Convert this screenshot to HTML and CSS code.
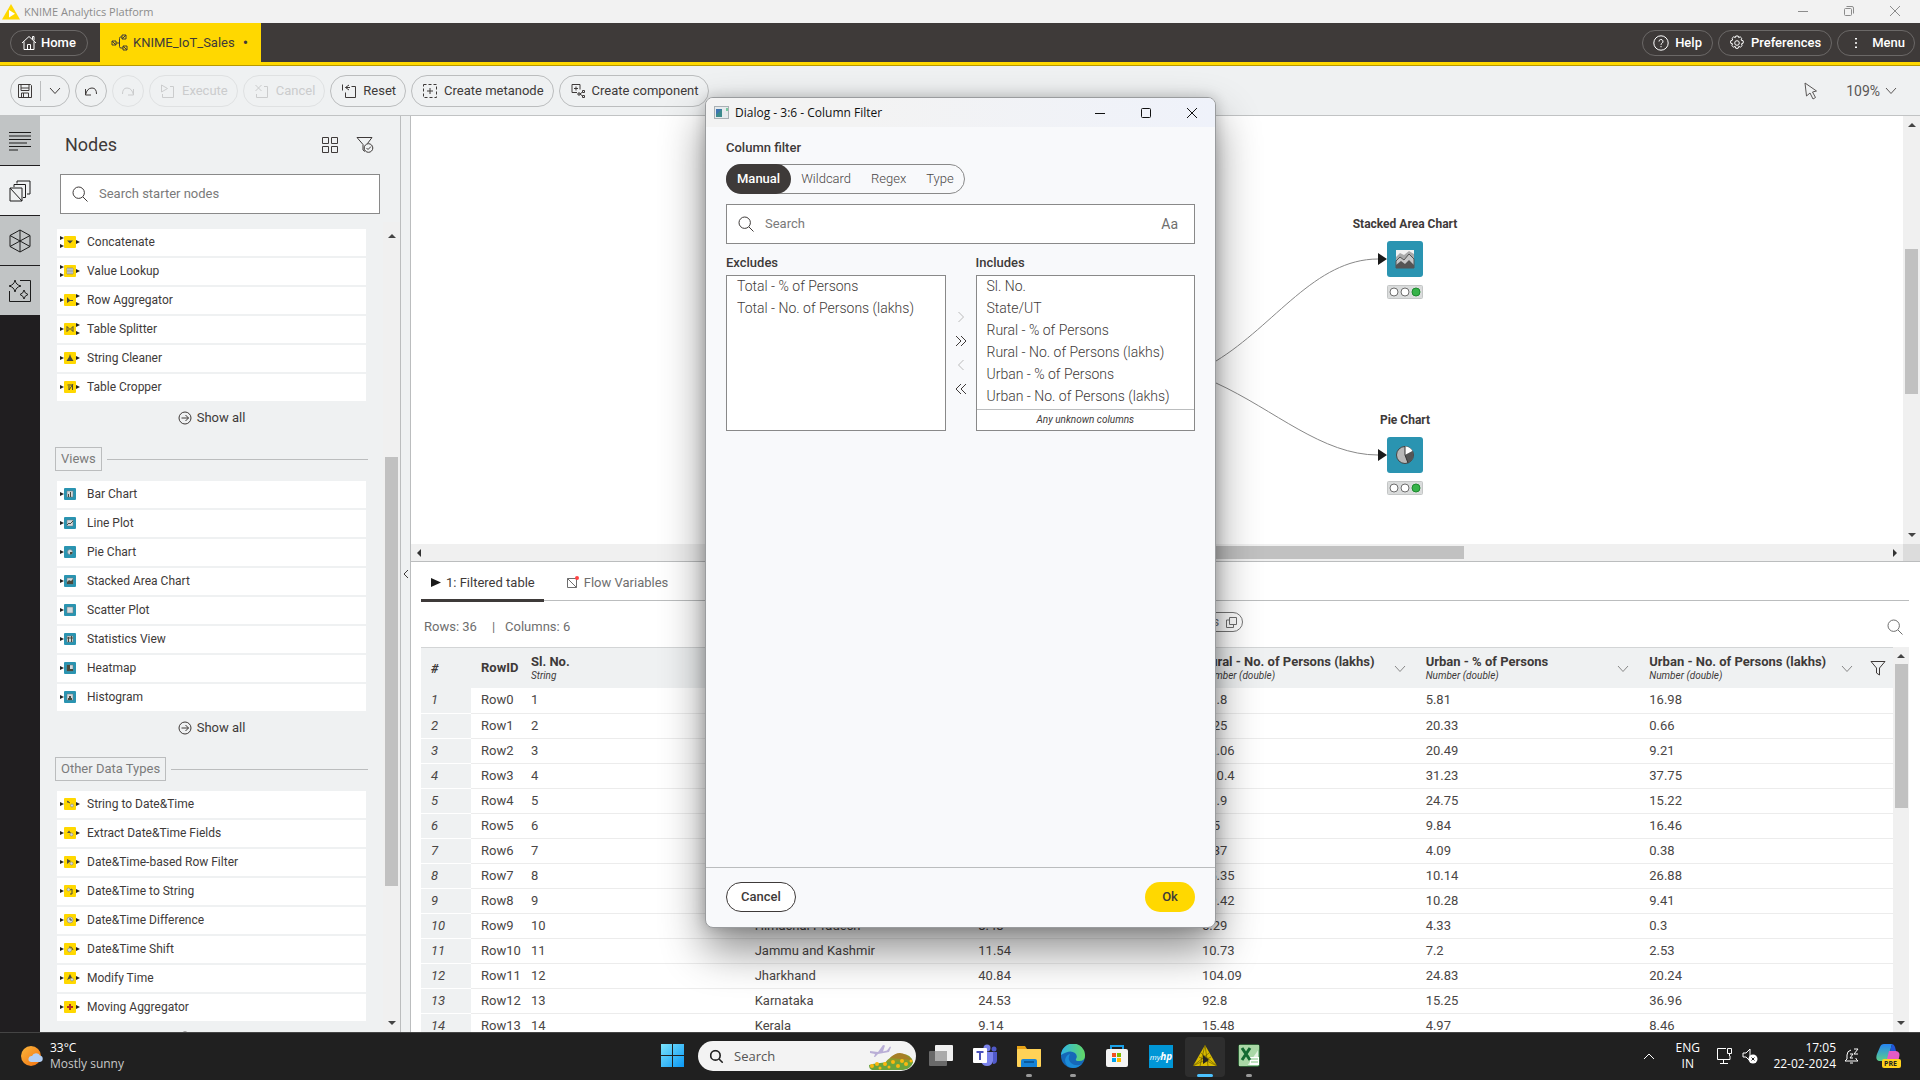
FILE: index.html
```html
<!DOCTYPE html>
<html lang="en">
<head>
<meta charset="utf-8">
<title>KNIME Analytics Platform</title>
<link rel="stylesheet" href="styles.css">
</head>
<body>
<svg class="defs" aria-hidden="true">
  <symbol id="search" viewBox="0 0 16 16"><circle cx="6.7" cy="6.7" r="5.7"/><path d="M11 11l4.500 4.500"/></symbol>
  <symbol id="chev" viewBox="0 0 12 8"><path d="M1 1l5 5.500 5-5.500"/></symbol>
  <symbol id="go" viewBox="0 0 14 14"><circle cx="7" cy="7" r="6"/><path d="M3.500 7h7M7.500 4l3 3-3 3"/></symbol>
  <symbol id="n11" viewBox="0 0 20 14"><path class="port" d="M0 5l4 2-4 2zM16 5l4 2-4 2z"/><rect class="yel" x="4" y="1" width="12" height="12" rx="1"/></symbol>
  <symbol id="n21" viewBox="0 0 20 14"><path class="port" d="M0 1l4 2-4 2zM0 9l4 2-4 2zM16 5l4 2-4 2z"/><rect class="yel" x="4" y="1" width="12" height="12" rx="1"/></symbol>
  <symbol id="n12" viewBox="0 0 20 14"><path class="port" d="M0 5l4 2-4 2zM16 1l4 2-4 2zM16 9l4 2-4 2z"/><rect class="yel" x="4" y="1" width="12" height="12" rx="1"/></symbol>
  <symbol id="n10" viewBox="0 0 20 14"><path class="port" d="M0 5l4 2-4 2z"/><rect class="blu" x="4" y="1" width="12" height="12" rx="1"/></symbol>
  <symbol id="lights" viewBox="0 0 36 14"><rect x=".5" y=".5" width="35" height="13" rx="1" fill="#dadcdc" stroke="#c4c6c6"/><g fill="#fff" stroke="#6e6e6e"><circle cx="7" cy="7" r="4"/><circle cx="18" cy="7" r="4"/></g><circle cx="29" cy="7" r="4" fill="#37b34a" stroke="#1d8a2f"/></symbol>
</svg>

<header class="titlebar">
  <svg width="18" height="16" viewBox="0 0 18 16"><path d="M9 0l9 15.500H0z" fill="#ffd800"/><path d="M7 6l6 3.700-6 3.700z" fill="#fff"/></svg>
  <span class="app-name">KNIME Analytics Platform</span>
  <div class="win-btns">
    <button aria-label="Minimize"><svg width="12" height="12"><path d="M1 6.500h10"/></svg></button>
    <button aria-label="Restore"><svg width="12" height="12"><rect x="1.500" y="3.500" width="7" height="7" rx="1"/><path d="M3.500 1.500h5.500a1.500 1.500 0 0 1 1.500 1.500v5.500"/></svg></button>
    <button aria-label="Close"><svg width="12" height="12"><path d="M1 1l10 10M11 1L1 11"/></svg></button>
  </div>
</header>

<nav class="appbar">
  <button class="dark-btn home"><svg width="16" height="16"><path d="M1 8l7-6.500L15 8M3 6.500v8h10v-8M6.500 14.500v-5h3v5M11.500 4.500v-3h1.500v4"/></svg>Home</button>
  <button class="tab-file"><svg width="18" height="18"><path d="M1 7h4v4H1zM1 7l4 4M11 1h4v4h-4zM11 5l4-4M12 12h4v4h-4zM12 12l4 4M5 9h3.500M11 3H9.500q-1 0-1 1.500v8q0 1.500 1.500 1.500h2"/></svg>KNIME_IoT_Sales<span class="dot">•</span></button>
  <div class="app-right">
    <button class="dark-btn help"><svg width="16" height="16"><circle cx="8" cy="8" r="7.200"/><path d="M6 6.500a2 2 0 1 1 3 1.700q-1 .6-1 1.600M8 11v1.200"/></svg>Help</button>
    <button class="dark-btn prefs"><svg width="16" height="16"><circle cx="8" cy="8" r="2.300"/><path d="M6.800 1h2.400l.5 1.600 1.500-.8 1.600 1.600-.8 1.600 2.200.8v2.400l-1.800.6.8 1.700-1.700 1.600-1.700-.7-.7 1.900H6.800l-.6-1.900-1.700.7-1.700-1.600.8-1.700-1.900-.6V5.800L3.700 5 3 3.400l1.700-1.600 1.600.8z"/></svg>Preferences</button>
    <button class="dark-btn menu"><svg width="16" height="16"><path d="M8 3v1.500M8 7.200v1.500M8 11.500V13"/></svg>Menu</button>
  </div>
</nav>

<div class="toolbar">
  <div class="pill save"><button aria-label="Save"><svg width="16" height="16"><path d="M1.500 1.500h12l1 1v12h-13zM4 1.500v6h8v-6M4.500 14.500V10h7v4.500M6.500 10v4.500M4 5h8"/></svg></button><button aria-label="Save options"><svg width="12" height="8"><use href="#chev"/></svg></button></div>
  <button class="pill round" aria-label="Undo"><svg width="14" height="14"><path d="M1.500 5v6h5.500M1.500 11Q3 4 8 4q4.500 0 4.500 6"/></svg></button>
  <button class="pill round" disabled aria-label="Redo"><svg width="14" height="14"><path d="M12.500 5v6H7M12.500 11Q11 4 6 4 1.500 4 1.500 10"/></svg></button>
  <button class="pill" disabled><svg width="16" height="16"><path d="M1.500 2l6 3.500-6 3.500zM10 3.500h3.500v11h-11V11"/></svg>Execute</button>
  <button class="pill" disabled><svg width="16" height="16"><path d="M1.500 2l6 6M7.500 2l-6 6M10 3.500h3.500v11h-11V11"/></svg>Cancel</button>
  <button class="pill"><svg width="16" height="16"><path d="M1.500 1.500v6M8 2L4.500 4.500 8 7M4.500 4.500H9M10.500 3.500h4v11h-10V9.500"/></svg>Reset</button>
  <button class="pill"><svg width="16" height="16"><rect x="1.500" y="1.500" width="13" height="13" stroke-dasharray="3 2"/><path d="M8 5v6M5 8h6"/></svg>Create metanode</button>
  <button class="pill"><svg width="16" height="16"><path d="M2 1.500h8v5M2 1.500v8h5M6 3.500v4M4 5.500h4M8 10h2v2H8zM12.500 7.500h2v2h-2zM12.500 12.500h2v2h-2zM10 11l2.500-2M10 11l2.500 2"/></svg>Create component</button>
  <div class="tool-right">
    <button class="plain" aria-label="Selection mode"><svg width="14" height="18"><path d="M1 1l1.500 13L6 11l3 6 2.500-1.500L8.500 10l4-1z"/></svg></button>
    <button class="plain zoom">109%<svg width="12" height="8"><use href="#chev"/></svg></button>
  </div>
</div>

<main class="main">
  <aside class="rail">
    <button aria-label="Description"><svg width="22" height="20"><path d="M0 1.500h22M0 5h22M0 8.500h22M0 12h18M0 15.500h22M0 19h9"/></svg></button>
    <button class="on" aria-label="Nodes"><svg width="22" height="22"><path d="M1 8h12v13H1zM1 8l12 13M5 7V4.500h11.500v13H14M8 3.500V1h13v13h-3"/></svg></button>
    <button aria-label="Components"><svg width="22" height="24"><path d="M11 1l10 5.500v11L11 23 1 17.500v-11zM11 1v22M1 6.500l20 11M21 6.500l-20 11"/></svg></button>
    <button aria-label="AI assistant"><svg width="24" height="24"><path d="M12 1.500h10.500v21H1.500V12M7 1q.8 5 6 6-5.200 1-6 6-.8-5-6-6 5.200-1 6-6zM16 11q.6 3.500 4 4.500-3.400 1-4 4.500-.6-3.500-4-4.500 3.400-1 4-4.500z"/></svg></button>
  </aside>

  <section class="repo">
    <div class="repo-head"><h2>Nodes</h2>
      <button class="plain" aria-label="Grid view"><svg width="18" height="18"><path d="M1.500 1.500h6v6h-6zM10.500 1.500h6v6h-6zM1.500 10.500h6v6h-6zM10.500 10.500h6v6h-6z"/></svg></button>
      <button class="plain" aria-label="Filter nodes"><svg width="18" height="18"><path d="M7 14V8.500L1 1.500h15l-4.500 6M7 14l2 1.500"/><circle cx="12.500" cy="12" r="4.300"/><path d="M10.500 12l1.500 1.500 3-3"/></svg></button>
    </div>
    <label class="field repo-search"><svg width="16" height="16"><use href="#search"/></svg><input type="text" placeholder="Search starter nodes" aria-label="Search starter nodes"></label>
    <div class="repo-body">
      <div class="repo-list">
        <ul>
          <li><svg class="nd"><use href="#n21"/><path class="g" d="M7 5.500h6l-3 3z"/></svg>Concatenate</li>
          <li><svg class="nd"><use href="#n21"/><path class="g w" d="M7 4h6v6H7zM7 7h6M9 4v6M11 4v6"/></svg>Value Lookup</li>
          <li><svg class="nd"><use href="#n12"/><path class="g" d="M7 4v6l3-2h3V7h-3z"/></svg>Row Aggregator</li>
          <li><svg class="nd"><use href="#n12"/><path class="g l" d="M7 4.500v5l2.500-2.500zM13 4.500v5L10.500 7z"/></svg>Table Splitter</li>
          <li><svg class="nd"><use href="#n11"/><path class="g" d="M10 3l1 3 2.500 4h-7L9 6z"/></svg>String Cleaner</li>
          <li><svg class="nd"><use href="#n11"/><path class="g l" d="M7.500 5h5v5M9 10l4-6M9 6v4"/></svg>Table Cropper</li>
        </ul>
        <a class="all" href="#data"><svg width="14" height="14"><use href="#go"/></svg>Show all</a>
        <h3><span>Views</span></h3>
        <ul>
          <li><svg class="nd"><use href="#n10"/><path class="g w" d="M7 4h6v6H7z"/><path class="g l" d="M8.500 7v3M10.500 5v5"/></svg>Bar Chart</li>
          <li><svg class="nd"><use href="#n10"/><path class="g w" d="M7 4h6v6H7z"/><path class="g l" d="M7 9l2-2 1 1 3-3"/></svg>Line Plot</li>
          <li><svg class="nd"><use href="#n10"/><circle class="g w" cx="10" cy="7" r="2.500"/><path class="g" d="M10 7h2.500a2.500 2.500 0 0 1-2.500 2.500z"/></svg>Pie Chart</li>
          <li><svg class="nd"><use href="#n10"/><path class="g w" d="M7 4h6v6H7z"/><path class="g" d="M7 8l2-2 2 1 2-2v5H7z"/></svg>Stacked Area Chart</li>
          <li><svg class="nd"><use href="#n10"/><path class="g w" d="M7 4h6v6H7z"/></svg>Scatter Plot</li>
          <li><svg class="nd"><use href="#n10"/><path class="g w" d="M7 4h6v6H7z"/><path class="g l" d="M8.500 5v5M11.500 4v6M7 6h6"/></svg>Statistics View</li>
          <li><svg class="nd"><use href="#n10"/><path class="g w" d="M7 4h6v6H7z"/><path class="g" d="M7 4h3v4h3v2H7z"/></svg>Heatmap</li>
          <li><svg class="nd"><use href="#n10"/><path class="g w" d="M7 4h6v6H7z"/><path class="g" d="M8 10V8h1V6h2v2h1v2z"/></svg>Histogram</li>
        </ul>
        <a class="all" href="#views"><svg width="14" height="14"><use href="#go"/></svg>Show all</a>
        <h3><span>Other Data Types</span></h3>
        <ul>
          <li><svg class="nd"><use href="#n11"/><path class="g l" d="M7 4l3 2M8 6V4"/><circle class="g w" cx="12" cy="8.500" r="1.500"/></svg>String to Date&amp;Time</li>
          <li><svg class="nd"><use href="#n11"/><path class="g" d="M7 7h4L9 4.500z"/><circle class="g w" cx="11.500" cy="8.500" r="1.500"/></svg>Extract Date&amp;Time Fields</li>
          <li><svg class="nd"><use href="#n11"/><path class="g" d="M7 4l4 2-4 3z"/><circle class="g w" cx="11.500" cy="8.500" r="1.500"/></svg>Date&amp;Time-based Row Filter</li>
          <li><svg class="nd"><use href="#n11"/><circle class="g w" cx="8.500" cy="5.500" r="1.500"/><path class="g l" d="M10 6l2-1v5h-2"/></svg>Date&amp;Time to String</li>
          <li><svg class="nd"><use href="#n11"/><circle class="g w" cx="10" cy="7" r="3"/><path class="g l" d="M10 5v2h2"/></svg>Date&amp;Time Difference</li>
          <li><svg class="nd"><use href="#n11"/><circle class="g w" cx="9.500" cy="8" r="2"/><path class="g l" d="M9 5q3-1 4 3"/></svg>Date&amp;Time Shift</li>
          <li><svg class="nd"><use href="#n11"/><path class="g" d="M7 9l3-6 2 4-3 1z"/><circle class="g w" cx="12" cy="8.500" r="1.500"/></svg>Modify Time</li>
          <li><svg class="nd"><use href="#n11"/><path class="plus" d="M10 4v6M7 7h6"/></svg>Moving Aggregator</li>
        </ul>
        <a class="all" href="#other"><svg width="14" height="14"><use href="#go"/></svg>Show all</a>
      </div>
      <div class="vbar repo-bar"><i class="up"></i><b></b><i class="down"></i></div>
    </div>
  </section>
  <button class="collapser" aria-label="Collapse panel"><svg width="6" height="10"><path d="M5 1L1 5l4 4"/></svg></button>

  <section class="work">
    <div class="canvas-row">
      <div class="canvas">
        <svg class="wires"><path d="M805 245C864 209 904 143 967 143M805 267C864 294 911 339 967 339"/><path class="tip" d="M967 137l9 6-9 6zM967 333l9 6-9 6z"/></svg>
        <div class="node area"><strong>Stacked Area Chart</strong>
          <svg width="36" height="36" viewBox="0 0 36 36"><rect width="36" height="36" rx="3" fill="#2a94b1"/><path d="M9 9h18v18H9z" fill="#f2f2f2"/><path d="M9 16l4-4 4 2 5-4 5 3v14H9z" fill="#aaa"/><path d="M9 20l4-4 4 3 5-6 5 5v9H9z" fill="#c8c8c8" stroke="#555"/><path d="M9 24l5-4 4 3 4-4 5 5v3H9z" fill="#555"/></svg>
          <svg width="36" height="14"><use href="#lights"/></svg></div>
        <div class="node pie"><strong>Pie Chart</strong>
          <svg width="36" height="36" viewBox="0 0 36 36"><rect width="36" height="36" rx="3" fill="#2a94b1"/><circle cx="18" cy="18" r="8.500" fill="#b8b8b8" stroke="#444"/><path d="M18 18V9.500a8.500 8.500 0 0 1 7.500 4.500z" fill="#fff"/><path d="M18 18l7.500-4a8.500 8.500 0 0 1-4.500 12z" fill="#555"/><path d="M18 9.500V18l3 8" fill="none" stroke="#333"/></svg>
          <svg width="36" height="14"><use href="#lights"/></svg></div>
      </div>
      <div class="vbar canvas-v"><i class="up"></i><b></b><i class="down"></i></div>
    </div>
    <div class="hbar"><i class="left"></i><b></b><i class="right"></i><span class="corner"></span></div>

    <div class="output">
      <div class="tabs">
        <button class="tab on"><svg width="10" height="10"><path d="M0 0l10 4.500L0 9z" fill="#1a1a1a"/></svg>1: Filtered table</button>
        <button class="tab"><svg width="13" height="13"><path d="M1.500 2.500h9v9h-9zM1.500 2.500l9 9"/><circle cx="11" cy="2" r="2" fill="#f44"/></svg>Flow Variables</button>
      </div>
      <div class="info">
        <span>Rows: 36</span><span class="bar">|</span><span>Columns: 6</span>
        <button class="stats">Statistics<svg width="13" height="13"><path d="M4.500 1.500h7v7h-7zM4.500 4h-3v7.500h7v-3"/></svg></button>
        <button class="plain find" aria-label="Search table"><svg width="16" height="16"><use href="#search"/></svg></button>
      </div>
      <div class="table-row">
        <div class="table-clip">
        <table>
          <colgroup><col class="c-i"><col class="c-r"><col><col><col><col><col><col><col class="c-f"></colgroup>
          <thead><tr><th><em class="hash">#</em></th><th>RowID</th>
            <th>Sl. No.<em>String</em></th><th></th><th></th>
            <th>Rural - No. of Persons (lakhs)<em>Number (double)</em><svg class="hc" width="12" height="8"><use href="#chev"/></svg></th>
            <th>Urban - % of Persons<em>Number (double)</em><svg class="hc" width="12" height="8"><use href="#chev"/></svg></th>
            <th>Urban - No. of Persons (lakhs)<em>Number (double)</em><svg class="hc" width="12" height="8"><use href="#chev"/></svg></th>
            <th class="fcell"><button class="plain" aria-label="Filter"><svg width="16" height="16"><path d="M1 1.500h14l-5.500 6.500v7l-3-2V8z"/></svg></button></th></tr></thead>
          <tbody>
            <tr><td>1</td><td>Row0</td><td>1</td><td></td><td></td><td>31.8</td><td>5.81</td><td>16.98</td><td></td></tr>
            <tr><td>2</td><td>Row1</td><td>2</td><td></td><td></td><td>1.25</td><td>20.33</td><td>0.66</td><td></td></tr>
            <tr><td>3</td><td>Row2</td><td>3</td><td></td><td></td><td>92.06</td><td>20.49</td><td>9.21</td><td></td></tr>
            <tr><td>4</td><td>Row3</td><td>4</td><td></td><td></td><td>320.4</td><td>31.23</td><td>37.75</td><td></td></tr>
            <tr><td>5</td><td>Row4</td><td>5</td><td></td><td></td><td>43.9</td><td>24.75</td><td>15.22</td><td></td></tr>
            <tr><td>6</td><td>Row5</td><td>6</td><td></td><td></td><td>7.5</td><td>9.84</td><td>16.46</td><td></td></tr>
            <tr><td>7</td><td>Row6</td><td>7</td><td></td><td></td><td>0.37</td><td>4.09</td><td>0.38</td><td></td></tr>
            <tr><td>8</td><td>Row7</td><td>8</td><td></td><td></td><td>75.35</td><td>10.14</td><td>26.88</td><td></td></tr>
            <tr><td>9</td><td>Row8</td><td>9</td><td></td><td></td><td>19.42</td><td>10.28</td><td>9.41</td><td></td></tr>
            <tr><td>10</td><td>Row9</td><td>10</td><td>Himachal Pradesh</td><td>8.48</td><td>5.29</td><td>4.33</td><td>0.3</td><td></td></tr>
            <tr><td>11</td><td>Row10</td><td>11</td><td>Jammu and Kashmir</td><td>11.54</td><td>10.73</td><td>7.2</td><td>2.53</td><td></td></tr>
            <tr><td>12</td><td>Row11</td><td>12</td><td>Jharkhand</td><td>40.84</td><td>104.09</td><td>24.83</td><td>20.24</td><td></td></tr>
            <tr><td>13</td><td>Row12</td><td>13</td><td>Karnataka</td><td>24.53</td><td>92.8</td><td>15.25</td><td>36.96</td><td></td></tr>
            <tr><td>14</td><td>Row13</td><td>14</td><td>Kerala</td><td>9.14</td><td>15.48</td><td>4.97</td><td>8.46</td><td></td></tr>
          </tbody>
        </table>
        </div>
        <div class="vbar table-v"><i class="up"></i><b></b><i class="down"></i></div>
      </div>
    </div>
  </section>
</main>

<div class="dialog" role="dialog" aria-label="Column Filter">
  <div class="dlg-title">
    <svg width="15" height="13"><rect x=".5" y=".5" width="14" height="12" fill="#e6eaec" stroke="#a9b0b4"/><rect x="2" y="3" width="6" height="8" fill="#3c8a8c"/><path d="M2 3h6l-6 6z" fill="#3d74b0"/><path d="M12 2h2v3h-2z" fill="#7ac9a0"/></svg>
    <span>Dialog - 3:6 - Column Filter</span>
    <div class="win-btns dlg-btns">
      <button aria-label="Minimize dialog"><svg width="12" height="12"><path d="M1 6.500h10"/></svg></button>
      <button aria-label="Maximize dialog"><svg width="12" height="12"><rect x="1.500" y="1.500" width="9" height="9" rx="1"/></svg></button>
      <button aria-label="Close dialog"><svg width="12" height="12"><path d="M1 1l10 10M11 1L1 11"/></svg></button>
    </div>
  </div>
  <div class="dlg-body">
    <h4>Column filter</h4>
    <div class="modes"><button class="on">Manual</button><button>Wildcard</button><button>Regex</button><button>Type</button></div>
    <div class="field dlg-search"><svg width="16" height="16"><use href="#search"/></svg><input type="text" placeholder="Search" aria-label="Search columns"><button class="plain case">Aa</button></div>
    <div class="twin">
      <div class="side"><h4>Excludes</h4><div class="box"><ul><li>Total - % of Persons</li><li>Total - No. of Persons (lakhs)</li></ul></div></div>
      <div class="moves">
        <button class="off" aria-label="Include selected"><svg width="12" height="12"><path d="M3.500 1l5 5-5 5"/></svg></button>
        <button aria-label="Include all"><svg width="12" height="12"><path d="M1 1l5 5-5 5M6 1l5 5-5 5"/></svg></button>
        <button class="off" aria-label="Exclude selected"><svg width="12" height="12"><path d="M8.500 1l-5 5 5 5"/></svg></button>
        <button aria-label="Exclude all"><svg width="12" height="12"><path d="M6 1L1 6l5 5M11 1L6 6l5 5"/></svg></button>
      </div>
      <div class="side"><h4>Includes</h4><div class="box"><ul><li>Sl. No.</li><li>State/UT</li><li>Rural - % of Persons</li><li>Rural - No. of Persons (lakhs)</li><li>Urban - % of Persons</li><li>Urban - No. of Persons (lakhs)</li></ul><p>Any unknown columns</p></div></div>
    </div>
  </div>
  <div class="dlg-foot"><button class="cancel">Cancel</button><button class="ok">Ok</button></div>
</div>

<footer class="taskbar">
  <div class="weather"><svg width="24" height="24"><defs><linearGradient id="sun" x1="0" y1="0" x2="1" y2="1"><stop offset="0" stop-color="#fbb73c"/><stop offset="1" stop-color="#f2700f"/></linearGradient></defs><circle cx="11" cy="12" r="10" fill="url(#sun)"/><path d="M11 18a3 3 0 0 1 1-6 4.500 4.500 0 0 1 8-.5 3.300 3.300 0 0 1 0 6.500z" fill="#b4d0f5"/></svg><div>33°C<br><span>Mostly sunny</span></div></div>
  <div class="apps">
    <button class="app start" aria-label="Start"><svg width="24" height="24"><defs><linearGradient id="win" x1="0" y1="0" x2="1" y2="1"><stop offset="0" stop-color="#7be3fb"/><stop offset="1" stop-color="#0a98f5"/></linearGradient></defs><path d="M0 0h11v11H0zM12 0h11v11H12zM0 12h11v11H0zM12 12h11v11H12z" fill="url(#win)"/></svg></button>
    <label class="tb-search"><svg width="15" height="15" viewBox="-1 -1 18 18"><use href="#search" width="16" height="16"/></svg><input type="text" placeholder="Search" aria-label="Taskbar search">
      <svg width="46" height="28" viewBox="0 0 46 28"><path d="M2 9l8 1 5-7 2 .5-2 6 4-1 3-4 1 .500-2 5-11 2-3 3h-1l1-3-5-1z" fill="#b9aed6"/><path d="M16 22q8-11 18-10 9 0 11 8-2 7-10 7H16z" fill="#8b9a2a"/><path d="M1 23q20-5 44-3-2 7-10 8H4q-3-1-3-5z" fill="#6ba33c"/><path d="M22 16q8-8 16-3l6 5z" fill="#a67f26"/><g fill="#fbb810"><circle cx="4" cy="24" r="2"/><circle cx="9" cy="22" r="2"/><circle cx="12" cy="26" r="1.500"/><circle cx="17" cy="22" r="2"/><circle cx="21" cy="25" r="1.500"/><circle cx="25" cy="20" r="2"/><circle cx="30" cy="24" r="2"/><circle cx="34" cy="19" r="2"/><circle cx="38" cy="22" r="2"/><circle cx="43" cy="19" r="1.500"/></g></svg></label>
    <button class="app" aria-label="Task view"><svg width="24" height="24"><rect x="6" y="1" width="18" height="16" rx="1" fill="#f0f0f0"/><rect y="7" width="18" height="15" rx="1" fill="#777" fill-opacity=".85"/><rect x="6" y="7" width="12" height="10" fill="#aaa"/></svg></button>
    <button class="app" aria-label="Teams"><svg width="24" height="24"><circle cx="14" cy="4" r="3.500" fill="#7b83eb"/><circle cx="21" cy="5" r="2.500" fill="#5059c9"/><path d="M18 8h6v8q0 4-4 4z" fill="#5059c9"/><path d="M8 8h12v9q-1 5-6 5t-6-5z" fill="#7b83eb"/><rect y="4" width="14" height="15" rx="1" fill="#fff"/><path d="M3.500 8h7M7 8v8" stroke="#4b53bc" stroke-width="2"/></svg></button>
    <button class="app run" aria-label="File Explorer"><svg width="24" height="24"><path d="M0 2h8l2 3h14v17H0z" fill="#e8a317"/><rect y="5" width="24" height="18" rx="1" fill="#ffd257"/><path d="M4 23v-6q0-2 2-2h12q2 0 2 2v6z" fill="#1683d8"/><path d="M7 18h10" stroke="#0b5a9c" stroke-width="2"/></svg></button>
    <button class="app run" aria-label="Edge"><svg width="24" height="24"><defs><linearGradient id="edge"><stop offset="0" stop-color="#2fb5e8"/><stop offset="1" stop-color="#63d963"/></linearGradient></defs><circle cx="12" cy="12" r="12" fill="#1668b8"/><path d="M0 11a12 12 0 0 1 24 1q0 5-6 5-4 0-3-2 2-3-1-6-5-4-14 2z" fill="url(#edge)"/><path d="M9 10q-3 5 1 9 5 4 11 1-4 4-9 4-8-1-8-8 1-5 5-6z" fill="#1b8cd8"/></svg></button>
    <button class="app" aria-label="Store"><svg width="24" height="24"><path d="M6 6V2h12v4" fill="none" stroke="#1aa0e8" stroke-width="2"/><rect x="1" y="5" width="22" height="18" rx="2" fill="#f4f4f4"/><path d="M7 9h4v4H7z" fill="#f25022"/><path d="M12 9h4v4h-4z" fill="#7fba00"/><path d="M7 14h4v4H7z" fill="#00a4ef"/><path d="M12 14h4v4h-4z" fill="#ffb900"/></svg></button>
    <button class="app" aria-label="myHP"><span class="hp">my<b>hp</b></span></button>
    <button class="app active" aria-label="KNIME"><svg width="24" height="24"><path d="M12 1l12 21H0z" fill="#d9bb00"/><path d="M12 1L7 22M12 1l3 21M0 22l16-13M24 22L8 9M0 22l18-9M24 22L6 13" stroke="#5a4f00" stroke-width=".6" fill="none"/><path d="M10 11l6 5-6 4z" fill="#222"/></svg></button>
    <button class="app run" aria-label="Excel"><svg width="24" height="24"><rect x="2" y="1" width="20" height="21" rx="1" fill="#e3f2e1" stroke="#3b9b4a"/><path d="M2 1h20v4L10 22H2z" fill="#a9d8a6"/><path d="M13 13h9v8h-9z" fill="#fff"/><path d="M5 4l8 12M13 4L5 16" stroke="#126b31" stroke-width="3"/><path d="M14 15h7M14 18h7" stroke="#7cc47f"/></svg></button>
  </div>
  <div class="tray">
    <svg width="12" height="8" class="more"><path d="M1 7l5-5 5 5"/></svg>
    <div class="lang">ENG<br>IN</div>
    <svg width="17" height="18"><path d="M10 1.500H1.500v11H14V9M7.500 12.500V16M4 16.500h8M11.500 1.500h4v5h-4zM13.500 6.500V9"/></svg>
    <svg class="snd" width="16" height="17"><path d="M1 6h3l4-4v12l-4-4H1z"/><circle cx="11" cy="12" r="4.500" fill="#fff"/><path d="M9.500 10.500l3 3M12.500 10.500l-3 3" stroke="#222"/></svg>
    <div class="clock">17:05<br>22-02-2024</div>
    <svg class="bell" width="16" height="18"><path d="M7 3Q3 4 3 8v4l-2 2h13l-2-2v-1M6 16h3M6 7h3l-3 4h3M10 2h4l-4 5h4"/></svg>
    <svg class="copilot" width="26" height="26" viewBox="0 0 26 26"><defs><linearGradient id="co" x2="0" y2="1"><stop offset="0" stop-color="#2584f4"/><stop offset="1" stop-color="#5bcf8a"/></linearGradient></defs><path d="M8 1h8l-4 15q-1 2-3 2H3q-4-1-2-7l3-7q1-3 4-3z" fill="url(#co)"/><path d="M13 8h7q5 1 3 7l-2 5H10z" fill="#e45bc5"/><path d="M16 1l-2 7h6l-1-4q-1-3-3-3z" fill="#2156d8"/><rect x="6" y="16" width="19" height="9" rx="2" fill="#ffd21c"/><text x="8" y="23">PRE</text></svg>
  </div>
</footer>
</body>
</html>
```
FILE: styles.css
```css
* { box-sizing: border-box; }
body { margin: 0; height: 100vh; display: flex; flex-direction: column; overflow: hidden; position: relative;
  font: 13px/16px Roboto, sans-serif; color: #3e3a39; background: #eff1f2; }
button { font: inherit; color: inherit; background: none; border: 0; padding: 0; margin: 0; }
svg { fill: none; stroke: currentColor; flex: none; }
svg [fill]:not([stroke]) { stroke: none; }
svg g[stroke] * { stroke: inherit; }
ul, h2, h3, h4, p { margin: 0; padding: 0; list-style: none; font-weight: 400; font-size: 13px; }
.defs { position: absolute; width: 0; height: 0; }
input { border: 0; outline: 0; background: none; font: inherit; color: inherit; padding: 0; min-width: 0; }
.plain { display: flex; align-items: center; }

/* window title */
.titlebar { height: 23px; flex: none; display: flex; align-items: center; gap: 4px; padding: 0 2px; background: #f2f2f2; color: #8c8c8c; }
.app-name { font: 11px/16px "Open Sans", sans-serif; }
.win-btns { margin-left: auto; display: flex; gap: 34px; }
.win-btns button { display: flex; }
.titlebar .win-btns { padding: 0 17px 2px 0; }

/* application bar */
.appbar { height: 42px; flex: none; display: flex; padding-left: 10px; background: #3e3a39; border-bottom: 3px solid #ffd800; }
.dark-btn { align-self: center; height: 26px; display: flex; align-items: center; border: 1px solid #6b6867; border-radius: 13px; color: #fff; font-weight: 500; gap: 4px; }
.home { padding: 0 10px; width: 78px; margin-right: 12px; }
.tab-file { width: 161px; background: #ffd800; display: flex; align-items: center; gap: 4px; padding-left: 11px; }
.dot { margin-left: 4px; font-size: 16px; }
.app-right { margin-left: auto; display: flex; gap: 5px; padding-right: 5px; }
.app-right .dark-btn { padding: 0 10px; gap: 6px; }
.app-right .menu { gap: 8px; padding-right: 9px; }
.menu svg { stroke-width: 2; }

/* toolbar */
.toolbar { height: 51px; flex: none; display: flex; align-items: center; gap: 5px; padding: 0 23px 0 10px; border-bottom: 1px solid #c1c3c4; border-top: 1px solid #b89a00; }
.pill { height: 32px; display: flex; align-items: center; gap: 6px; padding: 0 9px 0 10px; border: 1px solid #bbbdbe; border-radius: 16px; white-space: nowrap; }
.pill:disabled { color: #cbcccd; border-color: #dfe1e2; }
.pill.round { width: 32px; padding: 0; justify-content: center; }
.pill.save { width: 60px; padding: 0; gap: 0; }
.save button { height: 20px; flex: 1; display: flex; align-items: center; justify-content: center; }
.save button + button { border-left: 1px solid #bbbdbe; }
.tool-right { margin-left: auto; display: flex; gap: 28px; color: #5a5756; }
.zoom { font-size: 14px; gap: 5px; }

.main { flex: 1; min-height: 0; display: flex; }
.rail { width: 40px; flex: none; background: #201e20; display: flex; flex-direction: column; gap: 1px; }
.rail button { height: 49px; background: #c1c4c5; display: flex; align-items: center; justify-content: center; color: #1c1c1c; }
.rail .on { background: #eff1f2; }

/* node repository */
.repo { width: 361px; flex: none; border-right: 1px solid #bbbdbe; display: flex; flex-direction: column; min-height: 0; }
.repo-head { height: 58px; flex: none; display: flex; align-items: center; gap: 17px; padding: 0 26px 0 25px; }
.repo-head h2 { font-size: 18px; line-height: 24px; margin-right: auto; }
.field { display: flex; align-items: center; height: 40px; background: #fff; border: 1px solid #898989; padding: 0 12px 0 11px; gap: 11px; }
.field input { flex: 1; }
.field input::placeholder { color: #7a7a7a; opacity: 1; }
.repo-search { flex: none; margin: 0 20px 8px; }
.repo-body { flex: 1; min-height: 0; display: flex; }
.repo-list { flex: 1; padding: 7px 15px 0; overflow: hidden; }
.repo-list ul { display: grid; gap: 2px; padding: 0 2px; }
.repo-list li { height: 27px; background: #fff; display: flex; align-items: center; gap: 7px; padding: 0 3px 2px; font-size: 12px; }
.nd { width: 20px; height: 14px; stroke: none; }
.port { fill: #222; stroke: none; }
.yel { fill: #ffd800; stroke: none; }
.blu { fill: #2a94b1; stroke: none; }
.g { fill: #4a4a3c; stroke: none; }
.g.w { fill: #d4dade; stroke: #777; stroke-width: .5; }
.g.l { fill: none; stroke: #4a4a3c; }
.plus { stroke: #b5321e; stroke-width: 2; }
.all { height: 49px; display: flex; align-items: center; justify-content: center; gap: 5px; padding-bottom: 15px; color: inherit; text-decoration: none; }
.repo-list h3 { display: flex; align-items: center; gap: 5px; margin: -3px 0 10px; color: #7b7b7b; height: 24px; }
.repo-list h3 span { border: 1px solid #bbbdbe; padding: 3px 5px; }
.repo-list h3::after { content: ""; flex: 1; height: 1px; background: #bbbdbe; }

/* scroll bars */
.vbar { display: flex; flex-direction: column; align-items: center; justify-content: space-between; background: #f0f0f0; flex: none; position: relative; }
.vbar b, .hbar b { background: #c1c1c1; position: absolute; }
.vbar i, .hbar i { border: 4px solid transparent; width: 0; height: 0; }
.vbar .up { border-top: 0; border-bottom-color: #444; }
.vbar .down { border-bottom: 0; border-top-color: #444; }
.hbar .left { border-left: 0; border-right-color: #333; }
.hbar .right { border-right: 0; border-left-color: #333; }
.repo-bar { width: 17px; padding: 12px 0 7px; }
.repo-bar b { top: 29%; height: 53%; width: 13px; }
.canvas-v { width: 17px; padding: 7px 0; }
.canvas-v b { top: 31%; height: 34%; width: 13px; }
.table-v { width: 16px; padding: 7px 0; }
.table-v b { top: 17px; height: 144px; width: 13px; }
.hbar { height: 18px; flex: none; position: relative; background: #f0f0f0; display: flex; align-items: center; justify-content: space-between; padding: 0 0 0 6px; border-bottom: 1px solid #bbbdbe; }
.hbar b { left: 30%; right: 456px; height: 13px; }
.hbar .right { margin-left: auto; margin-right: 6px; }
.corner { width: 17px; height: 17px; background: #dcdcdc; }

.collapser { width: 10px; flex: none; border-right: 1px solid #bbbdbe; display: flex; align-items: center; justify-content: center; }
.work { flex: 1; min-width: 0; background: #fff; display: flex; flex-direction: column; }
.canvas-row { height: 428px; flex: none; display: flex; }
.canvas { flex: 1; position: relative; overflow: hidden; }
.wires { position: absolute; width: 100%; height: 100%; stroke: #888; }
.wires .tip { fill: #1a1a1a; stroke: none; }
.node { position: absolute; display: flex; flex-direction: column; align-items: center; width: 120px; left: 934px; }
.node strong { font-size: 12px; font-weight: 700; line-height: 16px; margin-bottom: 9px; white-space: nowrap; }
.node svg + svg { margin-top: 8px; }
.area { top: 100px; }
.pie { top: 296px; }

/* output view */
.output { flex: 1; min-height: 0; display: flex; flex-direction: column; padding: 0 11px 0 10px; }
.tabs { height: 39px; flex: none; display: flex; gap: 12px; box-shadow: inset 0 -1px #bbbdbe; }
.tab { height: 40px; display: flex; align-items: center; gap: 5px; padding: 1px 9px 0 10px; color: #6e6e6e; white-space: nowrap; }
.tab.on { border-bottom: 3px solid #3e3a39; color: #3e3a39; padding-top: 4px; }
.info { height: 46px; flex: none; display: flex; align-items: center; padding: 6px 6px 0 3px; color: #6e6e6e; }
.bar { margin: 0 10px 0 15px; }
.stats { margin-left: 578px; height: 20px; width: 95px; display: flex; align-items: center; justify-content: flex-end; gap: 6px; border: 1px solid #777; border-radius: 10px; padding-right: 4px; margin-bottom: 10px; }
.find { margin-left: auto; }
.table-row { flex: 1; min-height: 0; display: flex; }
.table-clip { flex: 1; min-width: 0; overflow: hidden; border-top: 1px solid #d3d5d6; }
table { width: 100%; table-layout: fixed; border-collapse: collapse; white-space: nowrap; }
.c-i, .c-r { width: 50px; }
.c-f { width: 30px; }
th { height: 40px; background: #eff1f2; text-align: left; padding: 0 0 0 10px; font-weight: 700; line-height: 14px; position: relative; vertical-align: middle; }
th em { display: block; font-size: 10px; font-weight: 400; line-height: 13px; }
th em.hash { font-size: 13px; font-weight: 700; }
.hc { position: absolute; right: 10px; top: 17px; color: #888; }
th.fcell { padding: 0 0 0 7px; }
td { height: 25px; padding: 0 0 0 10px; border-bottom: 1px solid #ececec; color: #4a4645; }
td:first-child { background: #eff1f2; font-style: italic; border-color: #fff; }

/* dialog window */
.dialog { position: absolute; left: 705px; top: 97px; bottom: 152px; width: 511px; display: flex; flex-direction: column; background: #f8f9fb; border: 1px solid #9a9c9e; border-radius: 8px; box-shadow: 0 22px 44px rgba(0,0,0,.45), 0 0 14px rgba(0,0,0,.2); overflow: hidden; }
.dlg-title { height: 29px; flex: none; display: flex; align-items: center; gap: 6px; padding: 0 17px 0 8px; background: linear-gradient(90deg, #f3f3f3 30%, #eff2fa); color: #111; font: 12px/16px "Open Sans", sans-serif; }
.dlg-body { flex: 1; padding: 13px 20px 0; }
h4 { font-weight: 500; line-height: 16px; }
.modes { display: inline-flex; height: 30px; margin: 8px 0 10px; border: 1px solid #898989; border-radius: 15px; color: #4a4645; }
.modes button { padding: 0 10px; margin: -1px 0; font-weight: 300; }
.modes .on { background: #3e3a39; color: #fff; border-radius: 15px; font-weight: 500; margin-left: -1px; padding: 0 11px; }
.dlg-search .case { font-size: 14px; color: #6e6e6e; margin-right: 4px; }
.twin { display: flex; margin-top: 11px; }
.side { flex: 1; min-width: 0; }
.box { margin-top: 4px; height: 156px; background: #fff; border: 1px solid #898989; display: flex; flex-direction: column; justify-content: space-between; white-space: nowrap; }
.box ul { margin-top: -1px; }
.box li { padding-left: 10px; font-size: 14px; line-height: 22px; font-weight: 300; }
.box p { height: 21px; border-top: 1px solid #bbbdbe; text-align: center; font-size: 10px; font-style: italic; font-weight: 400; line-height: 20px; }
.moves { width: 30px; flex: none; display: flex; flex-direction: column; align-items: center; gap: 12px; padding-top: 56px; }
.moves button { display: flex; }
.moves .off { color: #bbb; }
.dlg-foot { height: 60px; flex: none; border-top: 1px solid #bbbdbe; display: flex; align-items: center; justify-content: space-between; padding: 0 20px 2px; }
.dlg-foot button { height: 30px; border-radius: 15px; font-weight: 500; }
.cancel { width: 70px; border: 1px solid #3e3a39; background: #fff; }
.ok { width: 50px; background: #ffd800; }

/* task bar */
.taskbar { height: 48px; flex: none; background: #202020; border-top: 1px solid #444; color: #fff; display: grid; grid-template-columns: 651px 1fr auto; align-items: center; font: 12px/16px "Open Sans", sans-serif; position: relative; }
.weather { display: flex; align-items: center; gap: 6px; padding: 0 0 2px 20px; }
.weather span { color: #c8c8c8; }
.apps { display: flex; align-items: center; }
.app { width: 44px; height: 40px; display: flex; align-items: center; justify-content: center; position: relative; padding-bottom: 1px; }
.run::after, .active::after { content: ""; position: absolute; bottom: 0; width: 6px; height: 3px; border-radius: 2px; background: #999; }
.active { width: 40px; margin: 0 2px; background: #2e2e2e; border-radius: 4px; }
.active::after { width: 16px; background: #4cc2ff; }
.tb-search { width: 218px; height: 30px; margin: 0 3px 1px; border-radius: 15px; background: #f3f3f3; color: #222; display: flex; align-items: center; gap: 10px; padding: 0 2px 0 11px; font-size: 13px; overflow: hidden; }
.tb-search > svg:first-child { stroke-width: 2; }
.tb-search input { flex: 1; }
.tb-search input::placeholder { color: #555; opacity: 1; }
.hp { width: 24px; height: 23px; background: #0096d6; font-size: 8px; line-height: 22px; font-style: italic; }
.hp b { font-size: 10px; }
.tray { display: flex; align-items: center; padding: 0 18px 2px 0; text-align: center; }
.lang { margin: 0 16px 0 21px; }
.snd { margin: 0 12px 0 9px; }
.clock { text-align: right; width: 66px; margin-right: 8px; }
.bell { margin-right: 16px; }
.copilot { stroke: none; }
.copilot text { font: 700 7px/8px "Open Sans", sans-serif; fill: #222; stroke: none; }
```
